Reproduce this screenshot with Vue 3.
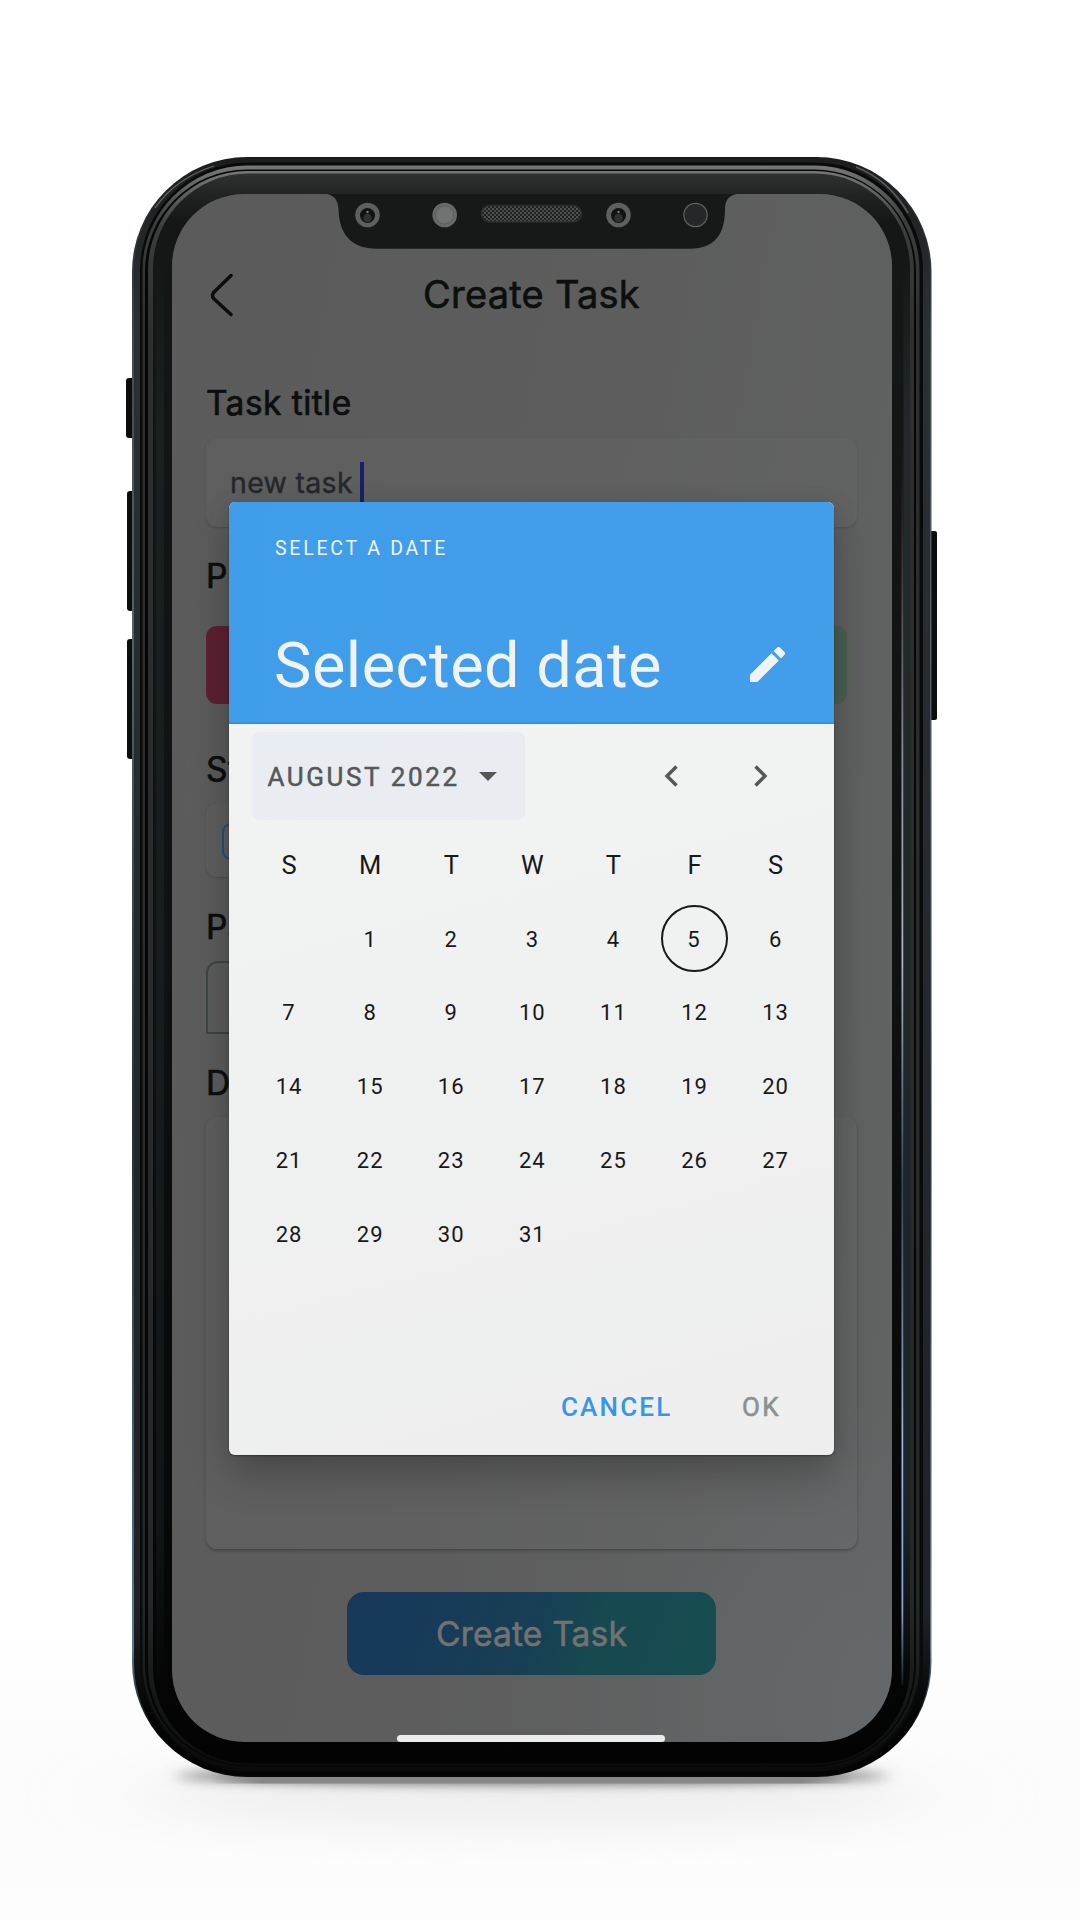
<script setup>
const weekdays = ['S', 'M', 'T', 'W', 'T', 'F', 'S']
const days = ['', ...Array.from({ length: 31 }, (_, i) => i + 1)]
const today = 5
</script>

<template>
  <main class="stage">
    <div class="phone">
      <svg class="frame" width="1080" height="1920" viewBox="0 0 1080 1920" aria-hidden="true">
        <defs>
          <linearGradient id="rim" x1="0" y1="0" x2="0" y2="1">
            <stop offset="0" stop-color="#1c1d1c" />
            <stop offset=".1" stop-color="#2b3033" />
            <stop offset=".9" stop-color="#1d2226" />
            <stop offset=".96" stop-color="#040404" />
          </linearGradient>
          <linearGradient id="steel" x1="0" y1="0" x2="0" y2="1">
            <stop offset="0" stop-color="#777" />
            <stop offset=".035" stop-color="#3c3d3d" />
            <stop offset=".1" stop-color="#2e3030" />
            <stop offset=".9" stop-color="#252828" />
            <stop offset="1" stop-color="#0c0c0c" />
          </linearGradient>
          <linearGradient id="glass" x1="0" y1="0" x2="0" y2="1">
            <stop offset="0" stop-color="#303232" />
            <stop offset=".015" stop-color="#202222" />
            <stop offset=".03" stop-color="#151717" />
            <stop offset=".5" stop-color="#0f1212" />
            <stop offset="1" stop-color="#030303" />
          </linearGradient>
          <linearGradient id="edge" x1="0" y1="0" x2="0" y2="1">
            <stop offset="0" stop-color="#1b1b1b" />
            <stop offset=".12" stop-color="#454b4f" />
            <stop offset=".3" stop-color="#52626c" />
            <stop offset=".6" stop-color="#263238" />
            <stop offset=".92" stop-color="#61788a" />
            <stop offset=".97" stop-color="#090909" />
          </linearGradient>
          <linearGradient id="glint" x1="0" y1="0" x2="0" y2="1">
            <stop offset="0" stop-color="#34251f" stop-opacity="0" />
            <stop offset=".12" stop-color="#4a4040" />
            <stop offset=".25" stop-color="#8b8e9a" />
            <stop offset=".42" stop-color="#b4b4c0" />
            <stop offset=".6" stop-color="#35435c" />
            <stop offset=".8" stop-color="#99b4df" />
            <stop offset=".94" stop-color="#86a5d3" />
            <stop offset="1" stop-color="#10161f" />
          </linearGradient>
          <linearGradient id="sheen" x1="0" y1="0" x2="0" y2="1">
            <stop offset="0" stop-color="#222a2c" stop-opacity="0" />
            <stop offset=".12" stop-color="#222a2c" />
            <stop offset=".88" stop-color="#1b2326" />
            <stop offset="1" stop-color="#1b2326" stop-opacity="0" />
          </linearGradient>
          <linearGradient id="contact" x1="0" y1="0" x2="1" y2="0">
            <stop offset="0" stop-color="#8a8787" stop-opacity="0" />
            <stop offset=".08" stop-color="#8a8787" />
            <stop offset=".92" stop-color="#8a8787" />
            <stop offset="1" stop-color="#8a8787" stop-opacity="0" />
          </linearGradient>
          <filter id="soft" x="-20%" y="-200%" width="140%" height="500%"><feGaussianBlur stdDeviation="9 6" /></filter>
          <filter id="wide" x="-30%" y="-100%" width="160%" height="300%"><feGaussianBlur stdDeviation="50 22" /></filter>
        </defs>
        <ellipse cx="532" cy="1796" rx="400" ry="30" fill="#ededed" filter="url(#wide)" />
        <ellipse cx="532" cy="1776" rx="356" ry="8" fill="#666" filter="url(#soft)" />
        <rect x="210" y="1774" width="644" height="9.500" rx="4" fill="url(#contact)" />
        <g fill="#0b0c0c">
          <rect x="126" y="378" width="12" height="60" rx="3" />
          <rect x="127" y="491" width="12" height="120" rx="3" />
          <rect x="127" y="639" width="12" height="120" rx="3" />
          <rect x="926" y="531" width="11" height="189" rx="2" />
        </g>
        <rect x="132" y="157" width="799.5" height="1620" rx="115" fill="url(#edge)" />
        <rect x="134" y="158.500" width="796" height="1617.500" rx="113" fill="url(#rim)" />
        <rect x="140" y="162.500" width="783" height="1609" rx="108" fill="#090a0a" />
        <rect x="142.500" y="165.500" width="777" height="1603" rx="105" fill="url(#steel)" />
        <rect x="145" y="169.500" width="771" height="1597" rx="102" fill="#050606" />
        <rect x="148" y="171" width="766" height="1594" rx="99" fill="url(#steel)" />
        <rect x="153" y="173.500" width="757" height="1590" rx="95" fill="url(#glass)" />
        <rect x="903.500" y="260" width="6.500" height="1430" fill="url(#sheen)" />
        <rect x="156" y="260" width="8" height="1430" fill="url(#sheen)" opacity=".5" />
        <rect x="901.500" y="440" width="1.800" height="1245" fill="url(#glint)" />
        <path d="M155 208Q176 178 214 166" fill="none" stroke="#aaaebc" stroke-width="1.300" opacity=".5" />
        <path d="M856 167Q889 180 908 213" fill="none" stroke="#9294a4" stroke-width="1.600" opacity=".5" />
      </svg>

      <section class="screen">
        <svg class="notch" width="420" height="56" viewBox="322 194 420 56" aria-hidden="true">
          <defs>
            <pattern id="mesh" width="4" height="4" patternUnits="userSpaceOnUse">
              <rect width="4" height="4" fill="#202121" />
              <rect width="2" height="2" fill="#505151" />
              <rect x="2" y="2" width="2" height="2" fill="#484949" />
            </pattern>
          </defs>
          <path d="M323 193.500C333 194 338 199 338.500 209C339 235 352 248.700 377 248.700H690C714 248.700 725 235 725 209C725 199 730 194 741 193.500Z" fill="#171919" />
          <g v-for="cx in [367.5, 618.5]" :key="cx">
            <circle :cx="cx" cy="215" r="12.300" fill="#5e5f5f" />
            <circle :cx="cx" cy="215.500" r="7.500" fill="#111313" />
            <circle :cx="cx" cy="218" r="4.200" fill="#303232" />
            <circle :cx="cx" cy="212" r="1.200" fill="#777" />
          </g>
          <circle cx="444.700" cy="215" r="12.300" fill="#686969" />
          <circle cx="444.700" cy="215" r="9" fill="#717272" stroke="#5b5c5c" />
          <rect x="481.500" y="205.500" width="100" height="16.500" rx="8.200" fill="url(#mesh)" stroke="#2b2c2c" stroke-width="1.500" />
          <circle cx="695.500" cy="215" r="11.700" fill="#252828" stroke="#606161" stroke-width="1.200" />
        </svg>

        <header class="nav">
          <svg class="back" width="24" height="44" viewBox="0 0 24 44"><path d="M21 2.500 3.600 19.500Q1.500 22.500 3.600 25.500L21 41.500" fill="none" stroke="#0b0e0d" stroke-width="3.500" stroke-linecap="round" stroke-linejoin="round" /></svg>
          <h1>Create Task</h1>
        </header>

        <form class="form" @submit.prevent>
          <label class="title-label">Task title</label>
          <div class="card title-input"><span>new task</span><i></i></div>
          <label class="pr">Pr</label>
          <div class="pills"><b class="high"></b><b class="low"></b></div>
          <label class="st">St</label>
          <div class="card option"><i></i></div>
          <label class="pa">Pa</label>
          <div class="tab"></div>
          <label class="de">D</label>
          <div class="card description"></div>
          <button class="create">Create Task</button>
        </form>
        <div class="home"></div>

        <div class="dialog">
          <div class="head">
            <p>SELECT A DATE</p>
            <div class="head-row">
              <h2>Selected date</h2>
              <svg class="edit" width="35" height="35" viewBox="3 3 18 18"><path fill="#f1f3f3" d="M3 17.250V21h3.750L17.810 9.940l-3.750-3.750zM20.710 7.040a1 1 0 0 0 0-1.410l-2.340-2.340a1 1 0 0 0-1.410 0l-1.830 1.830 3.750 3.750z" /></svg>
            </div>
          </div>
          <div class="month-row">
            <div class="month"><span>AUGUST 2022</span><svg width="18" height="9" viewBox="0 0 18 9"><path d="M0 0H18L9 9Z" fill="#555858" /></svg></div>
            <svg class="prev" width="14" height="22" viewBox="0 0 14 22"><path d="M12.500 1.500 3 11l9.500 9.500" fill="none" stroke="#555858" stroke-width="3.400" /></svg>
            <svg class="next" width="14" height="22" viewBox="0 0 14 22"><path d="M1.500 1.500 11 11 1.500 20.500" fill="none" stroke="#555858" stroke-width="3.400" /></svg>
          </div>
          <div class="grid">
            <div v-for="(d, i) in weekdays" :key="'w' + i" class="weekday">{{ d }}</div>
            <div v-for="(d, i) in days" :key="i" class="day"><span :class="{ today: d === today }">{{ d }}</span></div>
          </div>
          <div class="actions"><span class="cancel">CANCEL</span><span class="ok">OK</span></div>
        </div>
      </section>
    </div>
  </main>
</template>

<style>
body { margin: 0; background: #fff; }
</style>

<style scoped>
* { box-sizing: border-box; }
.stage {
  width: 1080px;
  height: 1920px;
  overflow: hidden;
  background: linear-gradient(#fff 0 84%, #fcfcfc 91%, #fcfcfc 95%, #fdfdfd);
}
.phone { position: relative; width: 1080px; height: 1920px; padding: 194px 188px 0 172px; }
.frame { position: absolute; left: 0; top: 0; }
.screen {
  position: relative;
  width: 720px;
  height: 1548px;
  border-radius: 72px;
  overflow: hidden;
  font-family: Inter, sans-serif;
  color: #0c0f0e;
  background:
    radial-gradient(circle at 96% 97%, rgba(104, 108, 113, .5), transparent 300px),
    linear-gradient(100deg, #5a5b5a 0%, #5c5d5c 50%, #626464 100%);
}
.notch { position: absolute; left: 150px; top: 0; }
.nav { height: 141px; padding: 60px 34px 0; display: flex; align-items: center; }
.back { margin-left: 4px; }
h1 { flex: 1; margin: -1px 29px 0 0; text-align: center; font-size: 38px; font-weight: 400; line-height: 50px; letter-spacing: .25px; -webkit-text-stroke: .6px currentColor; }
.form { display: flex; flex-direction: column; padding: 48px 35px 0 34px; }
label { display: block; height: 40px; line-height: 40px; font-size: 33.500px; font-weight: 400; letter-spacing: .45px; -webkit-text-stroke: .7px currentColor; }
.card {
  border-radius: 11px;
  background: rgba(110, 113, 112, .17);
  box-shadow: 0 1px 2px rgba(20, 24, 24, .2);
}
.title-input { height: 89px; margin-top: 15px; padding: 24px 0 0 24px; display: flex; }
.title-input span { font-size: 28.500px; line-height: 42px; letter-spacing: .3px; color: #25272d; -webkit-text-stroke: .4px currentColor; }
.title-input i { width: 4px; height: 50px; margin-left: 7px; background: #172168; }
.pr { margin-top: 29px; }
.pills { height: 78px; margin-top: 30px; display: flex; justify-content: space-between; padding-right: 10px; }
.pills b { width: 150px; border-radius: 11px; }
.high { background: #5c2231; }
.low { background: #496052; }
.st { margin-top: 45px; }
.option { width: 320px; height: 74px; margin-top: 14px; padding: 20px 0 0 16px; }
.option i { display: block; width: 36px; height: 37px; border: 2.500px solid #235078; border-radius: 9px; }
.pa { margin-top: 30px; }
.tab { width: 320px; height: 73px; margin-top: 14px; border: 2.500px solid #3d4446; border-radius: 12px 12px 0 0; }
.de { margin-top: 29px; }
.description { height: 432px; margin-top: 14px; box-shadow: 0 2px 3px rgba(20, 24, 24, .3); }
.create {
  align-self: center;
  width: 369px;
  height: 83px;
  margin-top: 43px;
  border: 0;
  border-radius: 17px;
  background: linear-gradient(110deg, #17395a 15%, #173f54 50%, #164950 66%, #174c50);
  color: #727271;
  font: 400 33.500px/82px Inter, sans-serif;
  letter-spacing: .2px;
  -webkit-text-stroke: .6px currentColor;
  padding: 0;
}
.home { position: absolute; left: 225px; top: 1541px; width: 268px; height: 7px; border-radius: 4px; background: #ececec; }
.dialog {
  position: absolute;
  left: 57px;
  top: 308px;
  width: 605px;
  height: 953px;
  overflow: visible;
  border-radius: 6px;
  background: linear-gradient(165deg, #f2f3f3, #f0f1f1 50%, #eee);
  box-shadow: 0 22px 40px rgba(0, 0, 0, .2), 0 4px 26px rgba(0, 0, 0, .09), 0 1px 2px rgba(0, 0, 0, .35);
  font-family: Roboto, sans-serif;
  color: #171919;
}
.head {
  height: 222px;
  padding: 34px 49px 0 45px;
  border-radius: 6px 6px 0 0;
  background: linear-gradient(90deg, #409dea, #439eea);
  border-bottom: 2px solid #3291e6;
  color: #f1f3f3;
}
.head p { margin: 0; padding-left: 1px; font-size: 19.500px; line-height: 25px; letter-spacing: 2.770px; }
.head-row { margin-top: 67px; display: flex; align-items: center; justify-content: space-between; }
.edit { margin-top: -3px; }
h2 { margin: 0; font-size: 63px; line-height: 76px; font-weight: 400; letter-spacing: .5px; white-space: nowrap; }
.month-row { height: 104px; padding: 8px 0 0 22.500px; display: flex; }
.month { width: 273px; height: 88px; padding-left: 16px; display: flex; align-items: center; border-radius: 7px; background: #e9ecf1; color: #555858; }
.month span { width: 211.500px; padding-top: 1px; font-size: 26px; font-weight: 400; letter-spacing: 2.600px; white-space: nowrap; -webkit-text-stroke: .5px currentColor; }
.prev { margin: 33px 0 0 139px; }
.next { margin: 33px 0 0 76px; }
.grid { margin-left: 19.500px; display: grid; grid-template-columns: repeat(7, 81.100px); grid-auto-rows: 73.800px; }
.weekday, .day { display: flex; align-items: center; justify-content: center; }
.weekday { font-size: 25.500px; padding-top: 1px; }
.day { font-size: 22px; letter-spacing: 1px; padding-top: 1px; }
.today { width: 67px; height: 67px; line-height: 65px; text-align: center; border: 2px solid #171919; border-radius: 50%; flex: none; position: relative; top: -1px; left: -.5px; }
.actions { margin-top: 119px; padding-right: 53px; display: flex; justify-content: flex-end; font-size: 26px; line-height: 34px; font-weight: 500; letter-spacing: 2.200px; }
.cancel { color: #3696e8; margin-right: 69.500px; }
.ok { color: #8c9090; font-weight: 400; -webkit-text-stroke: .6px currentColor; letter-spacing: 2.400px; }
</style>
